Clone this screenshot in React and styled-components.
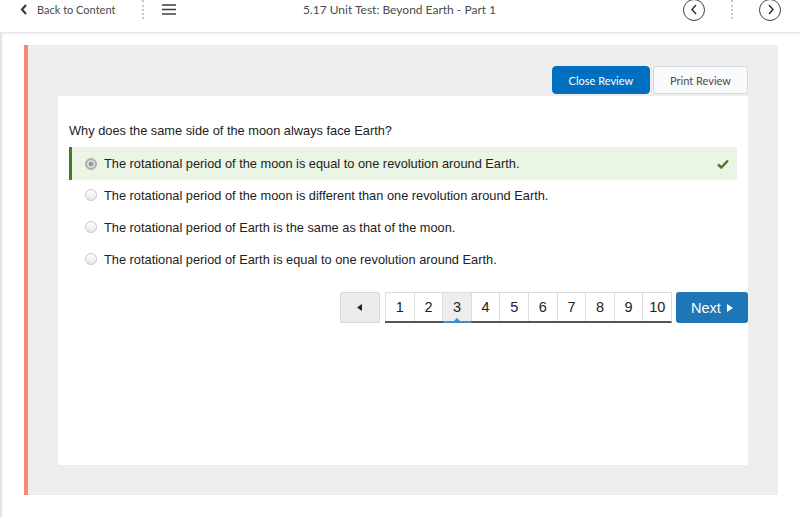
import React from "react";
import styled, { createGlobalStyle } from "styled-components";

const Global = createGlobalStyle`
  html, body { margin: 0; padding: 0; background: #fff; }
  body { font-family: "Liberation Sans", Arial, sans-serif; }
  * { box-sizing: border-box; }
`;

const Header = styled.header`
  height: 33px;
  padding: 0 19px 13px 18px;
  display: flex;
  align-items: center;
  border-bottom: 1px solid #e4e6e8;
  box-shadow: 0 1px 3px rgba(0,0,0,0.06);
  font-family: Lato, "Liberation Sans", sans-serif;
  color: #494c4e;
`;

const Side = styled.div`
  flex: 1;
  display: flex;
  align-items: center;
  justify-content: ${(p) => (p.$end ? "flex-end" : "flex-start")};
`;

const BackLink = styled.div`
  display: flex;
  align-items: center;
  gap: 9px;
  font-size: 11px;
  margin-left: 2px;
  width: 104px;
`;

const DotSep = styled.div`
  width: 0;
  height: 19px;
  border-left: 2px dotted #c5c8ca;
  margin: 0 ${(p) => p.$m || 18}px;
`;

const Title = styled.div`
  flex: none;
  text-align: center;
  font-size: 12px;
`;

const CircleBtn = styled.div`
  width: 22px;
  height: 22px;
  border-radius: 50%;
  border: 1.3px solid #3c3f41;
  display: flex;
  align-items: center;
  justify-content: center;
`;

const Main = styled.main`
  padding: 12px 22px 22px 24px;
  box-shadow: inset 3px 0 3px -2px #c6d0db;
`;

const Panel = styled.section`
  background: #ededed;
  border-left: 4px solid #f58b6c;
  height: 450px;
  padding: 21px 30px 30px 30px;
  display: flex;
  flex-direction: column;
`;

const ButtonRow = styled.div`
  display: flex;
  justify-content: flex-end;
  gap: 3px;
  margin-bottom: 2px;
`;

const ReviewBtn = styled.div`
  height: 28px;
  padding: 0 16px;
  border-radius: 4px;
  font-family: Lato, "Liberation Sans", sans-serif;
  font-size: 11px;
  display: flex;
  align-items: center;
  background: ${(p) => (p.$primary ? "#006fbf" : "#f9fafb")};
  color: ${(p) => (p.$primary ? "#fff" : "#494c4e")};
  border: 1px solid ${(p) => (p.$primary ? "#006fbf" : "#d3d9e3")};
`;

const Card = styled.div`
  background: #fff;
  flex: 1;
  padding: 25px 0 0 11px;
  display: flex;
  flex-direction: column;
`;

const Question = styled.div`
  font-size: 12.8px;
  line-height: 20px;
  color: #222;
  margin-bottom: 6px;
`;

const Options = styled.div`
  display: flex;
  flex-direction: column;
  padding-right: 11px;
`;

const Option = styled.div`
  height: ${(p) => (p.$correct ? 33 : 32)}px;
  margin-bottom: ${(p) => (p.$correct ? -1 : 0)}px;
  display: flex;
  align-items: center;
  padding-left: ${(p) => (p.$correct ? 13 : 16)}px;
  padding-right: 8px;
  border-left: ${(p) => (p.$correct ? "3px solid #4a7b1d" : "none")};
  background: ${(p) => (p.$correct ? "#ebf5e5" : "transparent")};
  font-size: 12.8px;
  color: #222;
`;

const Radio = styled.span`
  width: 12px;
  height: 12px;
  border-radius: 50%;
  flex: none;
  margin-right: 7px;
  border: 1px solid ${(p) => (p.$checked ? "#a9a9a9" : "#c4c4c4")};
  background: ${(p) =>
    p.$checked
      ? "radial-gradient(circle, #9a9a9a 0 2.2px, #e6e6e6 2.8px 3.4px, #b5b5b5 4px)"
      : "linear-gradient(#ffffff, #e9e9e9)"};
`;

const OptionText = styled.span`
  flex: 1;
`;

const Pager = styled.div`
  margin-top: 17px;
  display: flex;
  justify-content: flex-end;
  align-items: stretch;
  height: 31px;
`;

const PrevBtn = styled.div`
  width: 40px;
  background: #ececec;
  border: 1px solid #d9d9d9;
  border-radius: 2px;
  display: flex;
  align-items: center;
  justify-content: center;
  margin-right: 5px;
`;

const Pages = styled.div`
  display: flex;
  border-top: 1px solid #dcdcdc;
  border-right: 1px solid #dcdcdc;
  border-bottom: 2px solid #555;
  margin-right: 4px;
`;

const PageCell = styled.div`
  width: 28.6px;
  display: flex;
  align-items: center;
  justify-content: center;
  border-left: 1px solid #dcdcdc;
  font-size: 14.5px;
  color: #222;
  position: relative;
  background: ${(p) => (p.$active ? "#ededed" : "#fff")};
  ${(p) =>
    p.$active &&
    `
    &::after {
      content: "";
      position: absolute;
      left: 0; right: 0; bottom: -2px;
      height: 2px;
      background: #3f8fd0;
    }
    &::before {
      content: "";
      position: absolute;
      left: 50%; bottom: 0;
      margin-left: -3px;
      border-left: 3px solid transparent;
      border-right: 3px solid transparent;
      border-bottom: 3px solid #3f8fd0;
    }
  `}
`;

const NextBtn = styled.div`
  width: 72px;
  background: #1e76b6;
  border-radius: 3px;
  color: #fff;
  font-size: 14.5px;
  display: flex;
  align-items: center;
  justify-content: center;
  gap: 6px;
`;

const options = [
  "The rotational period of the moon is equal to one revolution around Earth.",
  "The rotational period of the moon is different than one revolution around Earth.",
  "The rotational period of Earth is the same as that of the moon.",
  "The rotational period of Earth is equal to one revolution around Earth.",
];

export default function App() {
  return (
    <>
      <Global />
      <Header>
        <Side>
          <BackLink>
            <svg width="8" height="11" viewBox="0 0 8 11">
              <path d="M6 1 L2 5.5 L6 10" fill="none" stroke="#3c3f41" strokeWidth="2.2" />
            </svg>
            Back to Content
          </BackLink>
          <DotSep $m={18} />
          <svg width="14" height="11" viewBox="0 0 14 11">
            <path d="M0 1h14M0 5.5h14M0 10h14" stroke="#3c3f41" strokeWidth="1.6" />
          </svg>
        </Side>
        <Title>5.17 Unit Test: Beyond Earth - Part 1</Title>
        <Side $end>
          <CircleBtn>
            <svg width="9" height="11" viewBox="0 0 9 11">
              <path d="M6 1 L2 5.5 L6 10" fill="none" stroke="#2a2c2e" strokeWidth="1.4" />
            </svg>
          </CircleBtn>
          <DotSep $m={26} />
          <CircleBtn>
            <svg width="9" height="11" viewBox="0 0 9 11">
              <path d="M3 1 L7 5.5 L3 10" fill="none" stroke="#2a2c2e" strokeWidth="1.4" />
            </svg>
          </CircleBtn>
        </Side>
      </Header>
      <Main>
        <Panel>
          <ButtonRow>
            <ReviewBtn $primary>Close Review</ReviewBtn>
            <ReviewBtn>Print Review</ReviewBtn>
          </ButtonRow>
          <Card>
            <Question>Why does the same side of the moon always face Earth?</Question>
            <Options>
              {options.map((t, i) => (
                <Option key={i} $correct={i === 0}>
                  <Radio $checked={i === 0} />
                  <OptionText>{t}</OptionText>
                  {i === 0 && (
                    <svg width="12" height="10" viewBox="0 0 12 10">
                      <path d="M1 5.5 L4.3 8.5 L11 1.5" fill="none" stroke="#4a7b1d" strokeWidth="2.4" />
                    </svg>
                  )}
                </Option>
              ))}
            </Options>
            <Pager>
              <PrevBtn>
                <svg width="6" height="7" viewBox="0 0 6 7">
                  <path d="M5 0 L0 3.5 L5 7 Z" fill="#222" />
                </svg>
              </PrevBtn>
              <Pages>
                {[1, 2, 3, 4, 5, 6, 7, 8, 9, 10].map((n) => (
                  <PageCell key={n} $active={n === 3}>{n}</PageCell>
                ))}
              </Pages>
              <NextBtn>
                Next
                <svg width="6" height="8" viewBox="0 0 6 8">
                  <path d="M0 0 L6 4 L0 8 Z" fill="#fff" />
                </svg>
              </NextBtn>
            </Pager>
          </Card>
        </Panel>
      </Main>
    </>
  );
}
